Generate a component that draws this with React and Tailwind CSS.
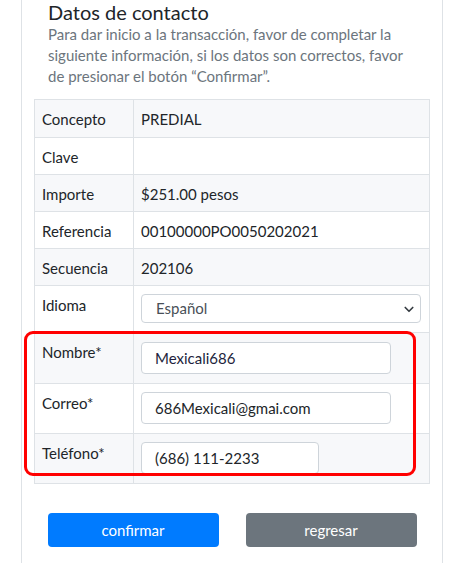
const rows = [
  { label: "Concepto", value: "PREDIAL", h: "h-[38px]", striped: true },
  { label: "Clave", value: "", h: "h-[37px]" },
  { label: "Importe", value: "$251.00 pesos", h: "h-[37px]", striped: true },
  { label: "Referencia", value: "00100000PO0050202021", h: "h-[37px]" },
  { label: "Secuencia", value: "202106", h: "h-[37px]", striped: true },
];

function Cell({ label, children, h, striped, last }) {
  return (
    <div
      className={`flex ${h} ${last ? "" : "border-b"} border-[#dee2e6] ${
        striped ? "bg-[#f7f8fa]" : "bg-white"
      }`}
    >
      <div className="w-[99px] shrink-0 border-r border-[#dee2e6] px-[7px] pt-[7px] leading-6">
        {label}
      </div>
      <div className="flex-1 px-[7px]">{children}</div>
    </div>
  );
}

export default function App() {
  return (
    <div
      className="min-h-[563px] bg-white text-[15px] text-[#212529]"
      style={{ fontFamily: 'Lato, "Open Sans", sans-serif' }}
    >
      <div className="ml-[21px] w-[422px] min-h-[563px] border-x border-[#dee2e6] px-3">
        <h2 className="pl-[14px] pt-[1px] text-[20px] leading-[23px]">Datos de contacto</h2>
        <p className="pl-[14px] whitespace-nowrap leading-[21px] text-[#6c757d]">
          Para dar inicio a la transacción, favor de completar la
          <br />
          siguiente información, si los datos son correctos, favor
          <br />
          de presionar el botón “Confirmar”.
        </p>

        <div className="mt-[12px] border border-[#dee2e6]">
          {rows.map((r) => (
            <Cell key={r.label} label={r.label} h={r.h} striped={r.striped}>
              <div className="pt-[7px] leading-6">{r.value}</div>
            </Cell>
          ))}

          <Cell label="Idioma" h="h-[47px]">
            <div className="relative mt-[8px] mr-[1px]">
              <select className="h-[29px] w-full appearance-none rounded border border-[#ced4da] bg-white pl-[14px] text-[15px] text-[#495057] outline-none">
                <option>Español</option>
              </select>
              <svg
                className="pointer-events-none absolute right-[6px] top-[9px]"
                width="12"
                height="12"
                viewBox="0 0 16 16"
                fill="none"
                stroke="#343a40"
                strokeWidth="2.2"
                strokeLinecap="round"
                strokeLinejoin="round"
              >
                <path d="M3 6l5 5 5-5" />
              </svg>
            </div>
          </Cell>

          <div className="relative">
            <Cell label="Nombre*" h="h-[51px]" striped>
              <input
                className="mt-[9px] h-[32px] w-[250px] rounded border border-[#ced4da] bg-white pl-[13px] text-[15px] text-[#231f3d] outline-none"
                defaultValue="Mexicali686"
              />
            </Cell>
            <Cell label="Correo*" h="h-[50px]">
              <input
                className="mt-[8px] h-[32px] w-[250px] rounded border border-[#ced4da] bg-white pl-[13px] text-[15px] text-[#212529] outline-none"
                defaultValue="686Mexicali@gmai.com"
              />
            </Cell>
            <Cell label="Teléfono*" h="h-[49px]" striped last>
              <input
                className="mt-[8px] h-[32px] w-[178px] rounded border border-[#ced4da] bg-white pl-[13px] text-[15px] text-[#212529] outline-none"
                defaultValue="(686) 111-2233"
              />
            </Cell>
            <div className="pointer-events-none absolute left-[-11px] top-[-2px] h-[145px] w-[392px] rounded-[9px] border-[3px] border-[#ff0000]" />
          </div>
        </div>

        <div className="mt-[29px] flex justify-center gap-[27px]">
          <button className="h-[34px] w-[171px] rounded bg-[#007bff] text-[15px] text-white">
            confirmar
          </button>
          <button className="h-[34px] w-[171px] rounded bg-[#6c757d] text-[15px] text-white">
            regresar
          </button>
        </div>
      </div>
    </div>
  );
}
